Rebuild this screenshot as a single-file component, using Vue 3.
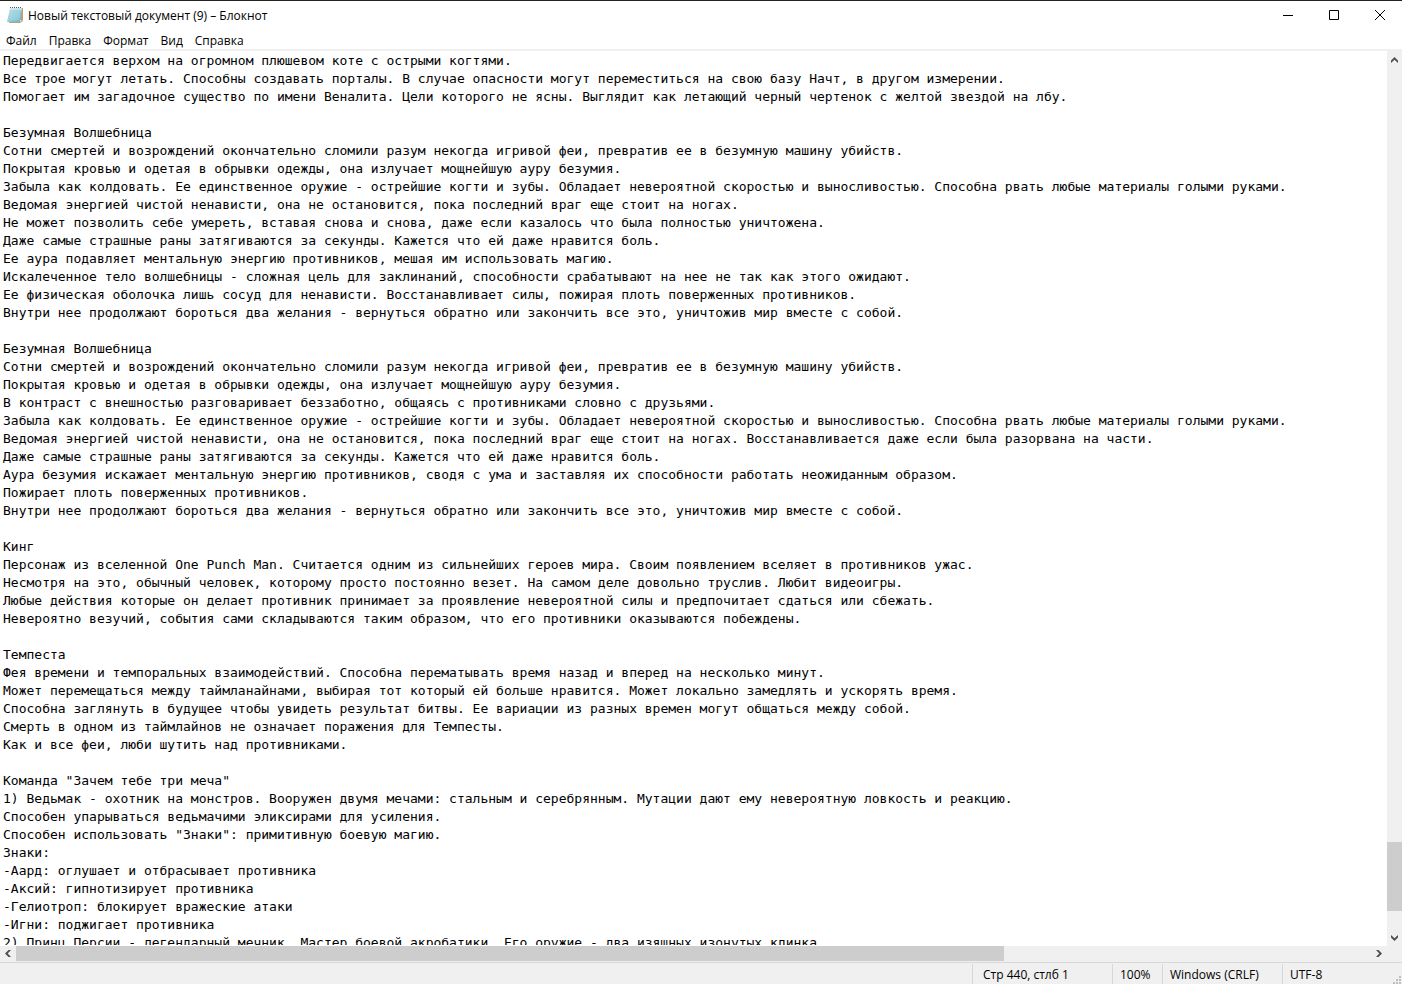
<script setup>
import { ref } from 'vue'

const menu = ['Файл', 'Правка', 'Формат', 'Вид', 'Справка']

const text = ref(`Передвигается верхом на огромном плюшевом коте с острыми когтями.
Все трое могут летать. Способны создавать порталы. В случае опасности могут переместиться на свою базу Начт, в другом измерении.
Помогает им загадочное существо по имени Веналита. Цели которого не ясны. Выглядит как летающий черный чертенок с желтой звездой на лбу.

Безумная Волшебница
Сотни смертей и возрождений окончательно сломили разум некогда игривой феи, превратив ее в безумную машину убийств.
Покрытая кровью и одетая в обрывки одежды, она излучает мощнейшую ауру безумия.
Забыла как колдовать. Ее единственное оружие - острейшие когти и зубы. Обладает невероятной скоростью и выносливостью. Способна рвать любые материалы голыми руками.
Ведомая энергией чистой ненависти, она не остановится, пока последний враг еще стоит на ногах.
Не может позволить себе умереть, вставая снова и снова, даже если казалось что была полностью уничтожена.
Даже самые страшные раны затягиваются за секунды. Кажется что ей даже нравится боль.
Ее аура подавляет ментальную энергию противников, мешая им использовать магию.
Искалеченное тело волшебницы - сложная цель для заклинаний, способности срабатывают на нее не так как этого ожидают.
Ее физическая оболочка лишь сосуд для ненависти. Восстанавливает силы, пожирая плоть поверженных противников.
Внутри нее продолжают бороться два желания - вернуться обратно или закончить все это, уничтожив мир вместе с собой.

Безумная Волшебница
Сотни смертей и возрождений окончательно сломили разум некогда игривой феи, превратив ее в безумную машину убийств.
Покрытая кровью и одетая в обрывки одежды, она излучает мощнейшую ауру безумия.
В контраст с внешностью разговаривает беззаботно, общаясь с противниками словно с друзьями.
Забыла как колдовать. Ее единственное оружие - острейшие когти и зубы. Обладает невероятной скоростью и выносливостью. Способна рвать любые материалы голыми руками.
Ведомая энергией чистой ненависти, она не остановится, пока последний враг еще стоит на ногах. Восстанавливается даже если была разорвана на части.
Даже самые страшные раны затягиваются за секунды. Кажется что ей даже нравится боль.
Аура безумия искажает ментальную энергию противников, сводя с ума и заставляя их способности работать неожиданным образом.
Пожирает плоть поверженных противников.
Внутри нее продолжают бороться два желания - вернуться обратно или закончить все это, уничтожив мир вместе с собой.

Кинг
Персонаж из вселенной One Punch Man. Считается одним из сильнейших героев мира. Своим появлением вселяет в противников ужас.
Несмотря на это, обычный человек, которому просто постоянно везет. На самом деле довольно труслив. Любит видеоигры.
Любые действия которые он делает противник принимает за проявление невероятной силы и предпочитает сдаться или сбежать.
Невероятно везучий, события сами складываются таким образом, что его противники оказываются побеждены.

Темпеста
Фея времени и темпоральных взаимодействий. Способна перематывать время назад и вперед на несколько минут.
Может перемещаться между таймланайнами, выбирая тот который ей больше нравится. Может локально замедлять и ускорять время.
Способна заглянуть в будущее чтобы увидеть результат битвы. Ее вариации из разных времен могут общаться между собой.
Смерть в одном из таймлайнов не означает поражения для Темпесты.
Как и все феи, люби шутить над противниками.

Команда "Зачем тебе три меча"
1) Ведьмак - охотник на монстров. Вооружен двумя мечами: стальным и серебрянным. Мутации дают ему невероятную ловкость и реакцию.
Способен упарываться ведьмачими эликсирами для усиления.
Способен использовать "Знаки": примитивную боевую магию.
Знаки:
-Аард: оглушает и отбрасывает противника
-Аксий: гипнотизирует противника
-Гелиотроп: блокирует вражеские атаки
-Игни: поджигает противника
2) Принц Персии - легендарный мечник. Мастер боевой акробатики. Его оружие - два изящных изонутых клинка.`)
</script>

<template>
  <div class="window">
    <header class="titlebar">
      <svg class="app-icon" width="16" height="16" viewBox="0 0 16 16" aria-hidden="true">
        <defs>
          <linearGradient id="sheet" x1="0" y1="0" x2="1" y2="1">
            <stop offset="0" stop-color="#c9e8ef" />
            <stop offset="1" stop-color="#62b4cb" />
          </linearGradient>
        </defs>
        <path d="M14 1h2v13l-3 2H2v-2h10z" fill="#b5a27c" />
        <path d="M13 13h2l-2 2z" fill="#f3ead2" />
        <path d="M3 1h12l-2 13-1 1H0z" fill="url(#sheet)" />
        <path d="M3 4h11M3 6h10M2 8h11M2 10h11M1 12h11" stroke="#a9d6e2" stroke-width="1" fill="none" />
        <path d="M3 2h12" stroke="#e4f1f4" fill="none" />
        <path d="M3 .5h12" stroke="#445a62" stroke-dasharray="1 1" fill="none" />
      </svg>
      <h1 class="title">Новый текстовый документ (9) – Блокнот</h1>
      <div class="controls">
        <button type="button" aria-label="Свернуть">
          <svg width="10" height="10" viewBox="0 0 10 10"><path d="M0 5.5h10" /></svg>
        </button>
        <button type="button" aria-label="Развернуть">
          <svg width="10" height="10" viewBox="0 0 10 10"><path d="M.5.5h9v9h-9z" /></svg>
        </button>
        <button type="button" aria-label="Закрыть">
          <svg width="10" height="10" viewBox="0 0 10 10"><path d="M0 0l10 10M10 0L0 10" /></svg>
        </button>
      </div>
    </header>

    <nav class="menu">
      <button v-for="item in menu" :key="item" type="button">{{ item }}</button>
    </nav>

    <main class="editor">
      <textarea v-model="text" wrap="off" spellcheck="false" aria-label="Текст документа"></textarea>
      <div class="scroll vertical">
        <button type="button" aria-label="Вверх">
          <svg width="7" height="6" viewBox="0 0 7 6"><path d="M0 6V3.5L3.5 0 7 3.5V6L3.5 2.7z" /></svg>
        </button>
        <div class="track"><span class="before"></span><span class="thumb"></span><span class="after"></span></div>
        <button type="button" aria-label="Вниз">
          <svg width="7" height="6" viewBox="0 0 7 6"><path d="M0 0v2.5L3.5 6 7 2.5V0L3.5 3.3z" /></svg>
        </button>
      </div>
      <div class="scroll horizontal">
        <button type="button" aria-label="Влево">
          <svg width="6" height="7" viewBox="0 0 6 7"><path d="M6 0H3.5L0 3.5 3.5 7H6L2.7 3.5z" /></svg>
        </button>
        <div class="track"><span class="thumb"></span><span class="after"></span></div>
        <button type="button" aria-label="Вправо">
          <svg width="6" height="7" viewBox="0 0 6 7"><path d="M0 0h2.5L6 3.5 2.5 7H0l3.3-3.5z" /></svg>
        </button>
      </div>
    </main>

    <footer class="status">
      <span class="position">Стр 440, стлб 1</span>
      <span class="zoom">100%</span>
      <span class="eol">Windows (CRLF)</span>
      <span class="encoding">UTF-8</span>
      <svg class="grip" width="8" height="8" viewBox="0 0 8 8" aria-hidden="true">
        <path d="M6 0h2v2H6zM3 3h2v2H3zM6 3h2v2H6zM0 6h2v2H0zM3 6h2v2H3zM6 6h2v2H6z" fill="#bfbfbf" />
      </svg>
    </footer>
  </div>
</template>

<style>
body {
  margin: 0;
}
</style>

<style scoped>
.window {
  display: flex;
  flex-direction: column;
  height: 100vh;
  box-sizing: border-box;
  border-top: 1px solid #222;
  background: #fff;
  color: #000;
  font-family: "Open Sans", "Noto Sans", sans-serif;
  font-size: 12px;
  line-height: 16px;
  overflow: hidden;
}

button {
  display: flex;
  align-items: center;
  justify-content: center;
  margin: 0;
  padding: 0;
  border: 0;
  background: none;
  color: inherit;
  font: inherit;
}

.titlebar {
  display: flex;
  align-items: center;
  flex: none;
  height: 28px;
  padding-left: 7px;
}

.app-icon {
  flex: none;
}

.title {
  flex: 1;
  margin: 0 0 0 5px;
  padding-top: 1px;
  font-size: 12px;
  font-weight: 400;
  white-space: nowrap;
}

.controls {
  display: flex;
  align-self: stretch;
}

.controls button {
  width: 46px;
}

.controls button:last-child {
  width: 45px;
}

.controls svg {
  fill: none;
  stroke: #000;
}

.menu {
  display: flex;
  flex: none;
  height: 16px;
  gap: 12px;
  padding: 4px 0 0 6px;
  border-bottom: 2px solid #f0f0f0;
}

.editor {
  display: grid;
  flex: 1;
  min-height: 0;
  grid-template-columns: 1fr 15px;
  grid-template-rows: 1fr 15px;
  background: #f0f0f0;
}

textarea {
  display: block;
  box-sizing: border-box;
  width: 100%;
  height: 100%;
  margin: 0;
  padding: 1px 3px;
  border: 0;
  border-bottom: 1px solid #fff;
  outline: 0;
  resize: none;
  overflow: hidden;
  background: #fff;
  color: #000;
  font-family: "DejaVu Sans Mono", monospace;
  font-size: 13px;
  line-height: 18px;
  white-space: pre;
}

.scroll,
.track {
  display: flex;
}

.track {
  flex: 1;
}

.vertical,
.vertical .track {
  flex-direction: column;
}

.scroll button {
  flex: none;
  width: 16px;
}

.vertical button {
  width: 15px;
  height: 17px;
}

.scroll svg {
  fill: #505050;
}

.thumb {
  background: #cdcdcd;
}

.vertical .before {
  flex: 774;
}

.vertical .thumb {
  flex: 69;
}

.vertical .after {
  flex: 18;
}

.horizontal .thumb {
  flex: 988;
}

.horizontal .after {
  flex: 367;
}

.status {
  display: flex;
  flex: none;
  align-items: flex-end;
  justify-content: flex-end;
  height: 21px;
  margin-top: 1px;
  border-top: 1px solid #d7d7d7;
  outline: 1px solid #f0f0f0;
  background: #f0f0f0;
  line-height: 20px;
}

.status span {
  box-sizing: border-box;
  height: 20px;
  padding: 1px 0 0 7px;
  border-left: 1px solid #d7d7d7;
  white-space: nowrap;
}

.status .position {
  width: 140px;
  padding-left: 10px;
}

.status .zoom {
  width: 50px;
}

.status .eol {
  width: 120px;
}

.status .encoding {
  width: 111px;
}

.grip {
  flex: none;
  margin-right: 1px;
}
</style>
